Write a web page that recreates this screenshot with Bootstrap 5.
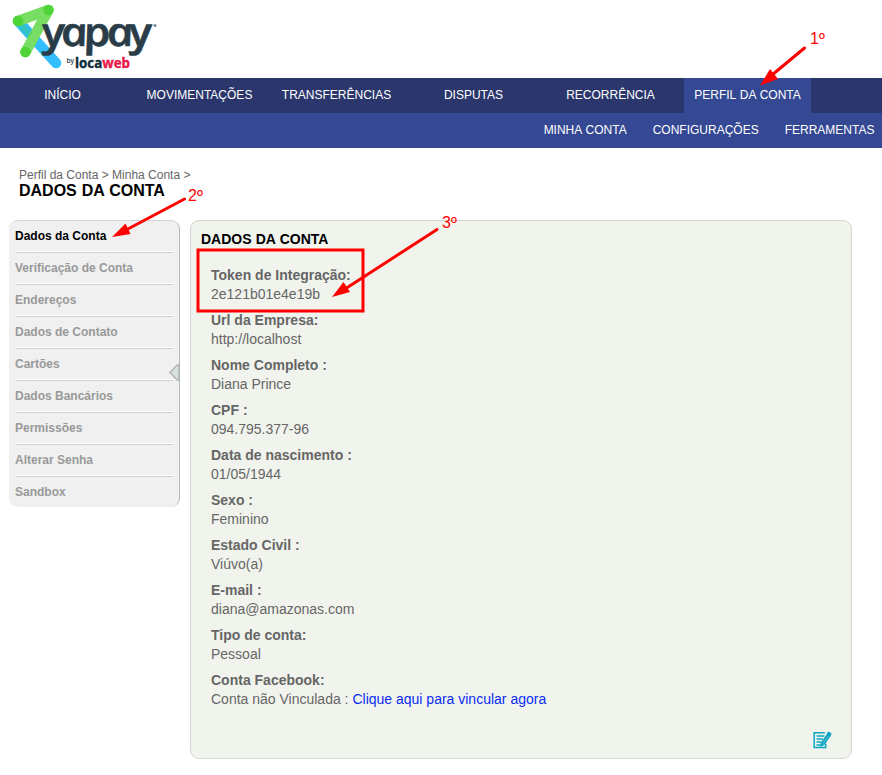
<!DOCTYPE html>
<html lang="pt-BR">
<head>
<meta charset="utf-8">
<meta name="viewport" content="width=device-width, initial-scale=1">
<title>Yapay - Dados da Conta</title>
<link href="https://cdn.jsdelivr.net/npm/bootstrap@5.3.0/dist/css/bootstrap.min.css" rel="stylesheet">
<style>
body{font-family:"Liberation Sans",Arial,sans-serif;font-size:12px;color:#666;background:#fff;min-height:775px;overflow:hidden}
.brand-bar{height:78px}
.main-menu{height:35px;background:#2b376c;gap:10px;margin-left:-1px}
.main-menu .nav-link{width:127px;height:35px;line-height:34px;padding:0;color:#fff;flex:none;word-spacing:.6px}
.main-menu .nav-link.active{background:#344893}
.sub-menu{height:35px;background:#344893;gap:26px;padding-right:7.5px}
.sub-menu .nav-link{padding:0;color:#fff;line-height:34px;word-spacing:.6px}
.crumbs{padding:20px 0 0 19px;height:72px}
.crumbs-path{line-height:14px}
.page-title{font-size:16px;line-height:18px;color:#000;word-spacing:.5px}
.content-area{gap:10px;padding-left:9px}
.side{width:171px;background:#f0f0f0;border-top:1px solid #d4d4d4;border-right:1px solid #b5b8ba;border-radius:9px;padding:0 6px 0 6px;height:287px;flex:none}
.side a{display:block;line-height:30px;color:#999;text-decoration:none;font-weight:bold;border-bottom:1px solid #d2d2d2;box-shadow:inset 0 -1px #fff;height:32px}
.side a:last-of-type{border:0;box-shadow:none;height:30px}
.side a.current{color:#000}
.side-toggle{right:-1px;top:143px}
.panel{width:662px;height:539px;background:#f1f4ed;border:1px solid #d2d7d0;border-radius:9px;padding:9px 20px 0}
.panel h2{font-size:14px;line-height:19px;margin:0 0 17px -10px;color:#000;word-spacing:.3px}
.panel dl{font-size:14px;line-height:19px;margin:0}
.panel dd{margin-bottom:7px}
.panel dd a{color:#0a2cf0;text-decoration:none}
.edit{right:19px;bottom:9px}
.guide{left:0;top:0;pointer-events:none}
</style>
</head>
<body>
<header>
  <div class="brand-bar">
    <svg class="d-block" width="170" height="78" role="img" aria-label="yapay by locaweb">
      <g stroke-linecap="round" stroke-width="10.500" fill="none">
        <path d="M18 21L56 63" stroke="#33bfff"/>
        <path d="M18 21L48.500 10L25.500 52" stroke="#78dd63" stroke-linejoin="round"/>
        <path d="M18 21h.01M48.500 10h.01M25.500 52h.01" stroke="#4ed434"/>
        <path d="M21 25L30 35" stroke="#33cc55" stroke-linecap="butt" stroke-width="7" opacity=".35"/>
      </g>
      <text transform="translate(44.500 46) skewX(12) scale(1.17 1)" font-family="Open Sans, sans-serif" font-style="italic" font-weight="600" font-size="40" fill="#293c47" stroke="#293c47" stroke-width=".5" textLength="94" lengthAdjust="spacing">yapay</text>
      <circle cx="155" cy="25.500" r="1.500" fill="#7c8890"/>
      <text x="66.500" y="63" font-family="Open Sans, sans-serif" font-weight="600" font-size="6.500" fill="#293c47">by</text>
      <text x="75" y="67.500" font-family="Open Sans, sans-serif" font-weight="700" font-size="13.500" fill="#0c2d3c" stroke="#0c2d3c" stroke-width=".4" textLength="55" lengthAdjust="spacingAndGlyphs">loca<tspan fill="#e9184b" stroke="#e9184b">web</tspan></text>
    </svg>
  </div>
  <nav class="nav main-menu flex-nowrap text-center">
    <a class="nav-link" href="#">INÍCIO</a>
    <a class="nav-link" href="#">MOVIMENTAÇÕES</a>
    <a class="nav-link" href="#">TRANSFERÊNCIAS</a>
    <a class="nav-link" href="#">DISPUTAS</a>
    <a class="nav-link" href="#">RECORRÊNCIA</a>
    <a class="nav-link active" href="#">PERFIL DA CONTA</a>
  </nav>
  <nav class="nav sub-menu justify-content-end flex-nowrap">
    <a class="nav-link" href="#">MINHA CONTA</a>
    <a class="nav-link" href="#">CONFIGURAÇÕES</a>
    <a class="nav-link" href="#">FERRAMENTAS</a>
  </nav>
</header>
<div class="crumbs">
  <div class="crumbs-path">Perfil da Conta &gt; Minha Conta &gt;</div>
  <h1 class="page-title fw-bold m-0">DADOS DA CONTA</h1>
</div>
<main class="content-area d-flex align-items-start">
  <aside class="side position-relative">
    <a class="current" href="#">Dados da Conta</a>
    <a href="#">Verificação de Conta</a>
    <a href="#">Endereços</a>
    <a href="#">Dados de Contato</a>
    <a href="#">Cartões</a>
    <a href="#">Dados Bancários</a>
    <a href="#">Permissões</a>
    <a href="#">Alterar Senha</a>
    <a href="#">Sandbox</a>
    <svg class="side-toggle position-absolute" width="11" height="17"><path d="M10 .8H8.500L.8 8.500L8.500 16.200H10z" fill="#d9dfdf" stroke="#a5adb0" stroke-width="1.200"/></svg>
  </aside>
  <section class="panel position-relative">
    <h2 class="fw-bold">DADOS DA CONTA</h2>
    <dl>
      <dt>Token de Integração:</dt><dd>2e121b01e4e19b</dd>
      <dt>Url da Empresa:</dt><dd>http://localhost</dd>
      <dt>Nome Completo :</dt><dd>Diana Prince</dd>
      <dt>CPF :</dt><dd>094.795.377-96</dd>
      <dt>Data de nascimento :</dt><dd>01/05/1944</dd>
      <dt>Sexo :</dt><dd>Feminino</dd>
      <dt>Estado Civil :</dt><dd>Viúvo(a)</dd>
      <dt>E-mail :</dt><dd>diana@amazonas.com</dd>
      <dt>Tipo de conta:</dt><dd>Pessoal</dd>
      <dt>Conta Facebook:</dt><dd>Conta não Vinculada : <a href="#">Clique aqui para vincular agora</a></dd>
    </dl>
    <svg class="edit position-absolute" width="19" height="18" fill="none" stroke="#0ba5c2">
      <path d="M12 1.700H1.200v14.800h11.500v-4" stroke-width="1.500"/>
      <path d="M3.500 5h8M3.500 8h6.500M3.500 11h5M3.500 14h4" stroke-width="1.300"/>
      <path d="M16.500 3L9.500 13" stroke-width="4"/>
      <path d="M15 5.300L10 12.300" stroke="#6cc8d8" stroke-width="1"/>
      <path d="M15.500 .8l2.800 2-1.200 1.800-3-2zM8 12l2.600 2-3 1.300z" fill="#0ba5c2" stroke-width=".8"/>
    </svg>
  </section>
</main>
<!-- Numbered walkthrough arrows over the page -->
<svg class="guide position-absolute" width="882" height="775" fill="none" stroke="#f00" stroke-width="3" font-family="Liberation Sans, Arial, sans-serif" font-size="16">
  <rect x="198" y="250" width="165" height="61"/>
  <g stroke-linecap="round"><path d="M804.500 48L772 75M184.500 199L126 230M437 229.500L345 289"/></g>
  <g fill="#f00" stroke="none">
    <path d="M760 85.500L770 69L778 79zM112 237L125.500 223.500L130.500 234zM332 297L343.500 282L350 292z"/>
    <text x="810" y="44">1º</text>
    <text x="188" y="201">2º</text>
    <text x="442" y="228">3º</text>
  </g>
</svg>
<script src="https://cdn.jsdelivr.net/npm/bootstrap@5.3.0/dist/js/bootstrap.bundle.min.js"></script>
</body>
</html>
